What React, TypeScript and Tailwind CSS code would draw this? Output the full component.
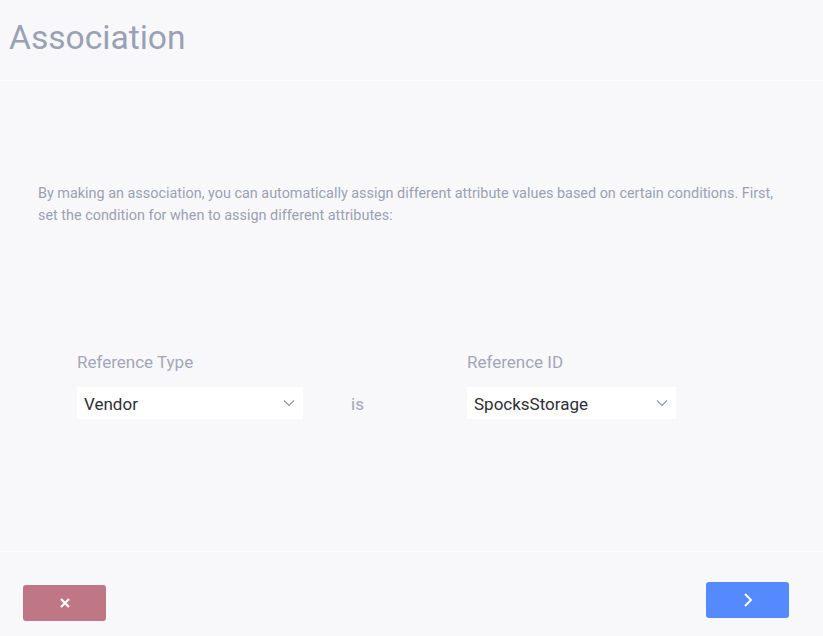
import React from "react";

const Chevron: React.FC = () => (
    <svg width="12" height="8" viewBox="0 0 12 8" fill="none" className="text-[#8a93a6]">
        <path d="M1 1.5 L6 6.5 L11 1.5" stroke="currentColor" strokeWidth="1.1" />
    </svg>
);

const Select: React.FC<{ value: string; width: string }> = ({ value, width }) => (
    <div className={`${width} h-8 bg-white flex items-center justify-between pl-[7px] pr-[8px]`}>
        <span className="mt-[3px] text-[17px] text-[#2d2f36]">{value}</span>
        <Chevron />
    </div>
);

const App: React.FC = () => {
    return (
        <div className="w-[823px] h-[636px] bg-[#f8f8fb] flex flex-col font-['Roboto',sans-serif]">
            <header className="h-[81px] border-b border-[#fdfdfe] flex items-start pt-[16px] pl-[9px]">
                <h1 className="text-[33.6px] leading-[44px] text-[#9aa1b5]">Association</h1>
            </header>

            <main className="flex-1 flex flex-col pl-[38px] pr-[40px]">
                <p className="mt-[102px] text-[14.4px] leading-[22px] text-[#9ba1b3] max-w-[745px]">
                    By making an association, you can automatically assign different attribute values based on certain conditions. First,
                    set the condition for when to assign different attributes:
                </p>

                <div className="mt-[124px] ml-[39px] flex items-end">
                    <div className="flex flex-col gap-[14px]">
                        <label className="text-[17px] leading-[22px] text-[#a3a6b8]">Reference Type</label>
                        <Select value="Vendor" width="w-[226px]" />
                    </div>
                    <span className="w-[164px] h-8 flex items-center pt-[3px] pl-[48px] text-[17px] text-[#a3a6b8]">is</span>
                    <div className="flex flex-col gap-[14px]">
                        <label className="text-[17px] leading-[22px] text-[#a3a6b8]">Reference ID</label>
                        <Select value="SpocksStorage" width="w-[209px]" />
                    </div>
                </div>
            </main>

            <footer className="h-[85px] border-t border-[#fdfdfe] flex items-start justify-between pl-[23px] pr-[34px]">
                <button className="mt-[33px] w-[83px] h-[36px] rounded-[3px] bg-[#bf7786] flex items-center justify-center">
                    <svg width="12" height="12" viewBox="0 0 12 12">
                        <path d="M2 2 L10 10 M10 2 L2 10" stroke="white" strokeWidth="2.2" />
                    </svg>
                </button>
                <button className="mt-[30px] w-[83px] h-[36px] rounded-[3px] bg-[#5589fe] flex items-center justify-center">
                    <svg width="10" height="16" viewBox="0 0 10 16">
                        <path d="M2 2 L8 8 L2 14" stroke="white" strokeWidth="2" fill="none" />
                    </svg>
                </button>
            </footer>
        </div>
    );
};

export default App;
